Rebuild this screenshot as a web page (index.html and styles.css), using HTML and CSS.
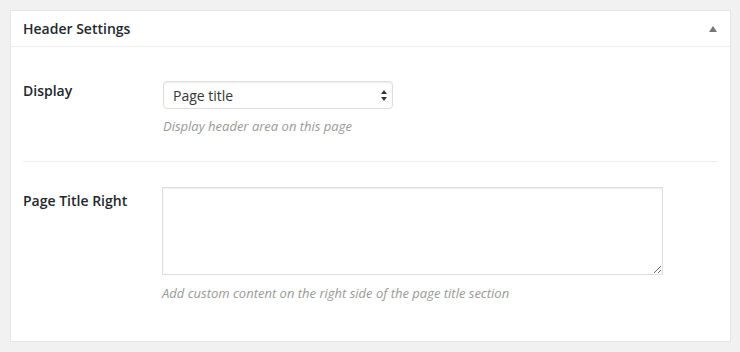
FILE: index.html
```html
<!DOCTYPE html>
<html>
  <head>
    <meta charset="utf-8">
    <link rel="stylesheet" href="styles.css">
  </head>
  <body>
    <div class="postbox">
      <div class="hndle">
        <h2>Header Settings</h2>
        <svg class="toggle" width="8" height="6" viewBox="0 0 8 6"><path d="M4 0 L8 6 L0 6 Z" fill="#72777c"/></svg>
      </div>
      <div class="inside">
        <div class="field first">
          <div class="field-label">Display</div>
          <div class="field-input">
            <div class="select-wrap">
              <select class="select">
                <option>Page title</option>
              </select>
              <svg class="arrows" width="6" height="11" viewBox="0 0 6 11"><path d="M3 0 L6 4 L0 4 Z M0 7 L6 7 L3 11 Z" fill="#32373c"/></svg>
            </div>
            <p class="description">Display header area on this page</p>
          </div>
        </div>
        <div class="field">
          <div class="field-label">Page Title Right</div>
          <div class="field-input">
            <textarea class="textarea"></textarea>
            <p class="description">Add custom content on the right side of the page title section</p>
          </div>
        </div>
      </div>
    </div>
  </body>
</html>
```
FILE: styles.css
```css
body {
  margin: 10px 9px 10px 10px;
  background: #f1f1f1;
  font-family: "Open Sans", "Liberation Sans", sans-serif;
  color: #23282d;
}
.postbox {
  background: #fff;
  border: 1px solid #e5e5e5;
  box-shadow: 0 1px 1px rgba(0, 0, 0, 0.04);
}
.hndle {
  display: flex;
  align-items: center;
  justify-content: space-between;
  height: 35px;
  padding: 0 13px 0 12px;
  border-bottom: 1px solid #eee;
}
.hndle h2 {
  margin: 0;
  font-size: 14px;
  font-weight: 600;
  line-height: 35px;
}
.toggle {
  display: block;
  margin-top: 1px;
}
.inside {
  padding: 0 12px;
}
.field {
  display: flex;
  padding: 25px 0 39px;
}
.field.first {
  padding: 30px 0 26px;
  border-bottom: 1px solid #eee;
}
.field-label {
  width: 139px;
  padding-top: 4px;
  font-size: 14px;
  font-weight: 600;
  line-height: 20px;
}
.field-input {
  flex: 1;
}
.select-wrap {
  position: relative;
  width: 230px;
  margin: 4px 0 0 1px;
}
.select {
  display: block;
  width: 230px;
  height: 28px;
  margin: 0;
  padding: 0 24px 0 9px;
  -webkit-appearance: none;
  appearance: none;
  background: #fff;
  border: 1px solid #ddd;
  border-radius: 4px;
  box-shadow: inset 0 1px 2px rgba(0, 0, 0, 0.07);
  font-family: "Open Sans", "Liberation Sans", sans-serif;
  font-size: 14px;
  color: #32373c;
  outline: none;
}
.arrows {
  position: absolute;
  right: 6px;
  top: 9px;
}
.textarea {
  display: block;
  box-sizing: border-box;
  width: 501px;
  height: 88px;
  margin: 0;
  border: 1px solid #ddd;
  box-shadow: inset 0 1px 2px rgba(0, 0, 0, 0.07);
  font-family: "Open Sans", "Liberation Sans", sans-serif;
  font-size: 14px;
}
.description {
  margin: 8px 0 0 1px;
  font-size: 13px;
  font-style: italic;
  line-height: 18px;
  color: #999;
}
.field .textarea + .description {
  margin-top: 9px;
  margin-left: 0;
}
```
